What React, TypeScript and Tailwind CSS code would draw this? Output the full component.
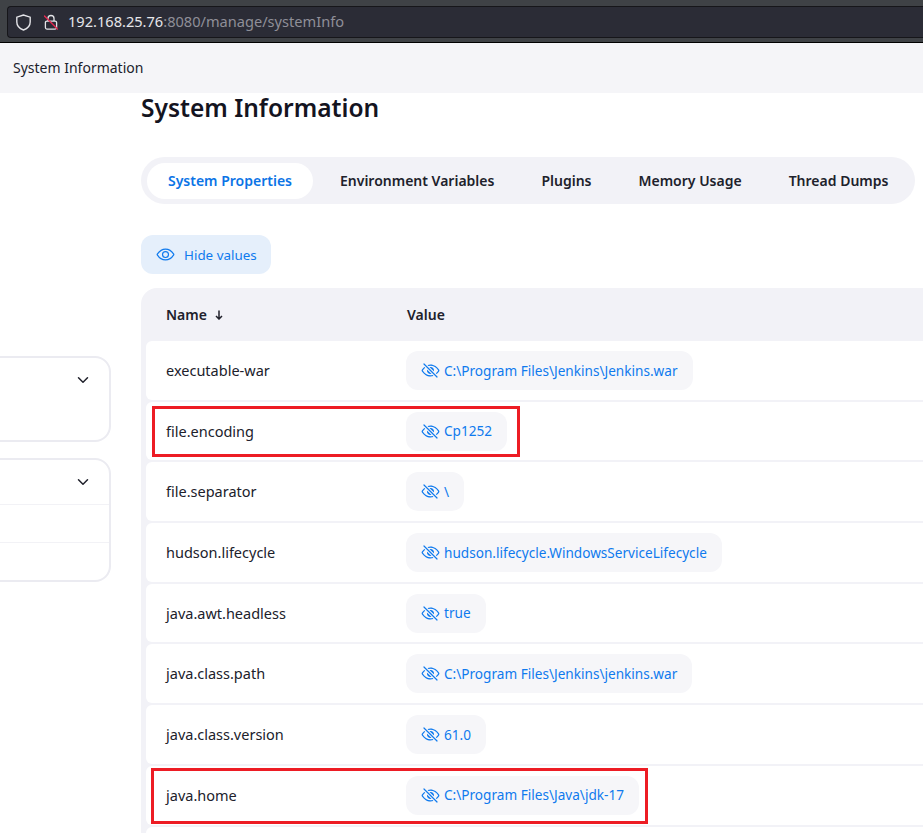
import { IoEyeOffOutline, IoEyeOutline, IoChevronDownOutline } from "react-icons/io5";

const rows: [string, string][] = [
  ["executable-war", "C:\\Program Files\\Jenkins\\Jenkins.war"],
  ["file.encoding", "Cp1252"],
  ["file.separator", "\\"],
  ["hudson.lifecycle", "hudson.lifecycle.WindowsServiceLifecycle"],
  ["java.awt.headless", "true"],
  ["java.class.path", "C:\\Program Files\\Jenkins\\jenkins.war"],
  ["java.class.version", "61.0"],
  ["java.home", "C:\\Program Files\\Java\\jdk-17"],
];

const tabs = ["Environment Variables", "Plugins", "Memory Usage", "Thread Dumps"];

function Row({ name, value }: { name: string; value: string }) {
  return (
    <div className="flex h-[58.7px] shrink-0 items-center rounded-[6px] bg-white">
      <div className="mt-[1px] w-[260px] shrink-0 pl-5 text-[14.5px] text-[#20212b]">{name}</div>
      <div className="flex h-[39px] items-center gap-[4px] rounded-[12px] bg-[#f6f6f9] pl-[15px] pr-[15px] text-[13.6px] text-[#0f7aee]">
        <IoEyeOffOutline className="h-[19px] w-[19px] shrink-0" />
        <span className="mt-[1px]">{value}</span>
      </div>
    </div>
  );
}

export default function App() {
  return (
    <div className="relative h-[833px] w-[923px] overflow-hidden bg-white font-['Noto_Sans',sans-serif]">
      <div className="h-[43px] border-b border-black bg-[#3f4246] pl-[7px] pt-[6px]">
        <div className="flex h-[32px] items-center rounded-l-[4px] border border-r-0 border-[#16161a] bg-[#2b2c36] pl-[7.5px]">
          <svg viewBox="1.5 1 13 14" className="h-[17px] w-[15px] text-[#e4e4e8]" fill="none" stroke="currentColor" strokeWidth="1.2">
            <path d="M8 1.5 2.2 3.4v4.2c0 3.3 2.3 5.7 5.8 6.9 3.5-1.2 5.8-3.6 5.8-6.9V3.4L8 1.5Z" />
          </svg>
          <svg viewBox="1.5 1.5 13 14" className="ml-[13.5px] h-[17px] w-[14px] text-[#e4e4e8]" fill="none" stroke="currentColor" strokeWidth="1.2">
            <path d="M5.2 7V4.8a2.8 2.8 0 0 1 5.6 0V7" />
            <rect x="2.8" y="7.2" width="10.4" height="7.4" rx="1.4" />
            <path d="M1.5 2 14.5 15" stroke="#e22850" strokeWidth="1.3" />
          </svg>
          <div className="ml-[10px] text-[14.6px] text-[#e6e6ea]">
            192.168.25.76<span className="text-[#8f8f98]">:8080/manage/systemInfo</span>
          </div>
        </div>
      </div>

      <div className="flex h-[50px] items-center bg-[#f5f5f8] pb-[2px] pl-[13px] text-[14px] text-[#20212b]">System Information</div>

      <div className="flex">
        <div className="w-[111px] shrink-0 overflow-hidden pt-[263px]">
          <div className="-ml-6 flex h-[86px] w-[135px] items-start justify-end rounded-[16px] border-2 border-[#ebebf1] pr-[18px] pt-[14px]">
            <IoChevronDownOutline className="h-[16px] w-[16px] text-[#20212b]" />
          </div>
          <div className="-ml-6 mt-[16px] w-[135px] rounded-[16px] border-2 border-[#ebebf1]">
            <div className="flex h-[44px] items-start justify-end pr-[18px] pt-[14px]">
              <IoChevronDownOutline className="h-[16px] w-[16px] text-[#20212b]" />
            </div>
            <div className="h-[38px] border-t border-[#f2f2f6]" />
            <div className="h-[38px] border-t border-[#f2f2f6]" />
          </div>
        </div>

        <div className="ml-[30px] w-[800px] shrink-0">
          <h1 className="mt-[-1px] text-[24.5px] leading-[32px] font-semibold text-[#14141f]">System Information</h1>
          <div className="mt-[33px] flex h-[47px] w-[774px] items-center rounded-[24px] bg-[#f2f2f7] pl-[6px]">
            <div className="flex h-[36px] w-[166px] items-center justify-center rounded-[18px] bg-white text-[14px] font-semibold text-[#0b74e6]">
              System Properties
            </div>
            <div className="ml-[27px] flex gap-[47px] text-[14px] font-semibold text-[#20212b]">
              {tabs.map((t) => (
                <span key={t}>{t}</span>
              ))}
            </div>
          </div>

          <div className="mt-[31px] flex h-[39px] w-[130px] items-center gap-[9px] rounded-[12px] bg-[#e5effb] pl-[15px] text-[13.4px] text-[#0f7aee]">
            <IoEyeOutline className="h-[19px] w-[19px] shrink-0" />
            <span className="mt-[2px]">Hide values</span>
          </div>

          <div className="mt-[14px] rounded-t-[16px] bg-[#f2f2f7] px-[5px]">
            <div className="flex h-[53px] items-center text-[14px] font-semibold text-[#20212b]">
              <div className="flex w-[261px] shrink-0 items-center gap-[8px] pl-5">
                <span>Name</span>
                <svg viewBox="0 0 8 10" className="h-[10px] w-[8px]" fill="none" stroke="currentColor" strokeWidth="1.5">
                  <path d="M4 .5v8.5M1 6l3 3 3-3" />
                </svg>
              </div>
              <span>Value</span>
            </div>
            <div className="flex flex-col gap-[2px]">
              {rows.map(([n, v]) => (
                <Row key={n} name={n} value={v} />
              ))}
              <div className="h-[58.7px] rounded-[6px] bg-white" />
            </div>
          </div>
        </div>
      </div>

      <div className="pointer-events-none absolute left-[152px] top-[406px] h-[51px] w-[368px] border-[3px] border-[#ed1c24]" />
      <div className="pointer-events-none absolute left-[151px] top-[768px] h-[56px] w-[497px] border-[3px] border-[#ed1c24]" />
    </div>
  );
}
